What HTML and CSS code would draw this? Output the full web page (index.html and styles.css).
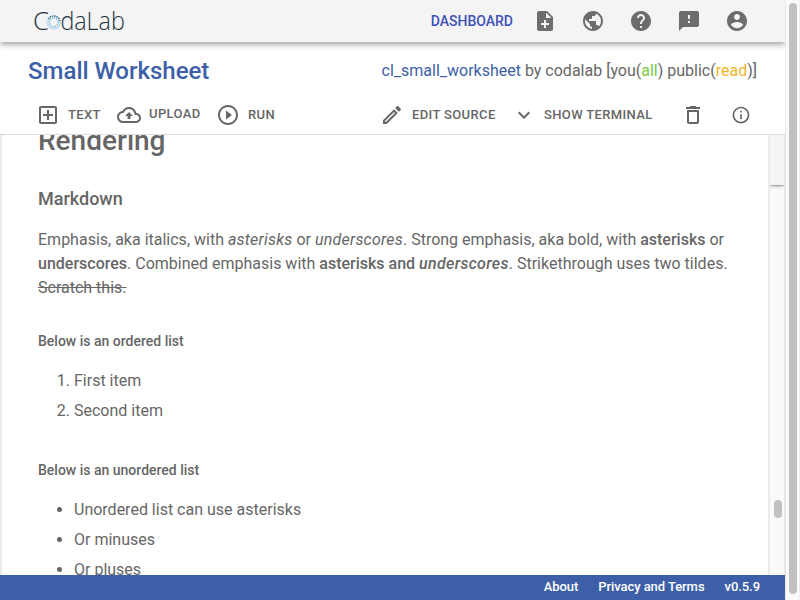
FILE: index.html
```html
<!DOCTYPE html>
<html lang="en">
<head>
<meta charset="utf-8">
<title>CodaLab Worksheets</title>
<link rel="stylesheet" href="styles.css">
</head>
<body>
<div class="app">
  <header class="navbar">
    <svg class="logo" width="96" height="36" viewBox="0 -2 96 36">
      <text x="0" y="25" textLength="16" lengthAdjust="spacingAndGlyphs">C</text>
      <g class="ring">
        <circle class="ring-light" cx="20.8" cy="17.3" r="6.4"/>
        <circle class="ring-mid" cx="20.8" cy="17.3" r="4.5"/>
        <path class="ring-dark" d="M15.3 14.2A6.4 6.4 0 0 1 27 16"/>
      </g>
      <text x="27.4" y="25" textLength="64.4" lengthAdjust="spacingAndGlyphs">daLab</text>
    </svg>
    <nav class="nav-links">
      <a class="dashboard">DASHBOARD</a>
      <svg class="icon" viewBox="0 0 24 24"><path d="M14 2H6c-1.1 0-1.99.9-1.99 2L4 20c0 1.1.89 2 1.99 2H18c1.1 0 2-.9 2-2V8l-6-6zm2 14h-3v3h-2v-3H8v-2h3v-3h2v3h3v2zm-3-7V3.5L18.5 9H13z"/></svg>
      <svg class="icon" viewBox="0 0 24 24"><path d="M12 2C6.48 2 2 6.48 2 12s4.48 10 10 10 10-4.48 10-10S17.52 2 12 2zm-1 17.93c-3.95-.49-7-3.85-7-7.93 0-.62.08-1.21.21-1.79L9 15v1c0 1.1.9 2 2 2v1.93zm6.9-2.54c-.26-.81-1-1.39-1.9-1.39h-1v-3c0-.55-.45-1-1-1H8v-2h2c.55 0 1-.45 1-1V7h2c1.1 0 2-.9 2-2v-.41c2.93 1.19 5 4.06 5 7.41 0 2.08-.8 3.97-2.1 5.39z"/></svg>
      <svg class="icon" viewBox="0 0 24 24"><path d="M12 2C6.48 2 2 6.48 2 12s4.48 10 10 10 10-4.48 10-10S17.52 2 12 2zm1 17h-2v-2h2v2zm2.07-7.75l-.9.92C13.45 12.9 13 13.5 13 15h-2v-.5c0-1.1.45-2.1 1.17-2.83l1.24-1.26c.37-.36.59-.86.59-1.41 0-1.1-.9-2-2-2s-2 .9-2 2H8c0-2.21 1.79-4 4-4s4 1.79 4 4c0 .88-.36 1.68-.93 2.25z"/></svg>
      <svg class="icon" viewBox="0 0 24 24"><path d="M20 2H4c-1.1 0-1.99.9-1.99 2L2 22l4-4h14c1.1 0 2-.9 2-2V4c0-1.1-.9-2-2-2zm-7 12h-2v-2h2v2zm0-4h-2V6h2v4z"/></svg>
      <svg class="icon" viewBox="0 0 24 24"><path d="M12 2C6.48 2 2 6.48 2 12s4.48 10 10 10 10-4.48 10-10S17.52 2 12 2zm0 3c1.66 0 3 1.34 3 3s-1.34 3-3 3-3-1.34-3-3 1.34-3 3-3zm0 14.2c-2.5 0-4.71-1.28-6-3.22.03-1.99 4-3.08 6-3.08 1.99 0 5.97 1.09 6 3.08-1.29 1.94-3.5 3.22-6 3.22z"/></svg>
    </nav>
  </header>

  <section class="ws-header">
    <div class="title-row">
      <h1 class="ws-title">Small Worksheet</h1>
      <div class="ws-meta"><a>cl_small_worksheet</a> by codalab [you(<span class="perm-all">all</span>) public(<span class="perm-read">read</span>)]</div>
    </div>
    <div class="toolbar">
      <button class="tool text"><svg class="icon" viewBox="0 0 24 24"><path d="M19 3H5c-1.11 0-2 .9-2 2v14c0 1.1.89 2 2 2h14c1.1 0 2-.9 2-2V5c0-1.1-.9-2-2-2zm0 16H5V5h14v14zm-8-2h2v-4h4v-2h-4V7h-2v4H7v2h4z"/></svg><span>TEXT</span></button>
      <button class="tool upload"><svg class="icon" viewBox="0 0 24 24"><path d="M19.35 10.04C18.67 6.59 15.64 4 12 4 9.11 4 6.6 5.64 5.35 8.04 2.34 8.36 0 10.91 0 14c0 3.31 2.69 6 6 6h13c2.76 0 5-2.24 5-5 0-2.64-2.05-4.78-4.65-4.96zM19 18H6c-2.21 0-4-1.79-4-4 0-2.05 1.53-3.76 3.56-3.97l1.07-.11.5-.95C8.08 7.14 9.94 6 12 6c2.62 0 4.88 1.86 5.39 4.43l.3 1.5 1.53.11c1.56.1 2.78 1.41 2.78 2.96 0 1.65-1.35 3-3 3zM8 13h2.55v3h2.9v-3H16l-4-4z"/></svg><span>UPLOAD</span></button>
      <button class="tool run"><svg class="icon" viewBox="0 0 24 24"><path d="M10 16.5l6-4.5-6-4.5v9zM12 2C6.48 2 2 6.48 2 12s4.48 10 10 10 10-4.48 10-10S17.52 2 12 2zm0 18c-4.41 0-8-3.59-8-8s3.59-8 8-8 8 3.59 8 8-3.59 8-8 8z"/></svg><span>RUN</span></button>
      <button class="tool edit"><svg class="icon" viewBox="0 0 24 24"><path d="M3 17.25V21h3.75L17.81 9.94l-3.75-3.75L3 17.25zM5.92 19H5v-.92l9.06-9.06.92.92L5.92 19zM20.71 5.63l-2.34-2.34c-.39-.39-1.02-.39-1.41 0l-1.83 1.83 3.75 3.75 1.83-1.83c.39-.39.39-1.02 0-1.41z"/></svg><span>EDIT SOURCE</span></button>
      <button class="tool terminal"><svg class="icon" viewBox="0 0 24 24"><path d="M7.41 8.59L12 13.17l4.59-4.58L18 10l-6 6-6-6 1.41-1.41z"/></svg><span>SHOW TERMINAL</span></button>
      <button class="tool trash"><svg class="icon" viewBox="0 0 24 24"><path d="M6 19c0 1.1.9 2 2 2h8c1.1 0 2-.9 2-2V7H6v12zM8 9h8v10H8V9zm7.5-5l-1-1h-5l-1 1H5v2h14V4z"/></svg></button>
      <button class="tool info"><svg class="icon small" viewBox="0 0 24 24"><path d="M11 17h2v-6h-2v6zm1-15C6.48 2 2 6.48 2 12s4.48 10 10 10 10-4.48 10-10S17.52 2 12 2zm0 18c-4.41 0-8-3.59-8-8s3.59-8 8-8 8 3.59 8 8-3.59 8-8 8zM11 9h2V7h-2v2z"/></svg></button>
    </div>
  </section>

  <div class="workspace">
    <main class="sheet">
      <h2>Rendering</h2>
      <h3>Markdown</h3>
      <p>Emphasis, aka italics, with <em>asterisks</em> or <em>underscores</em>. Strong emphasis, aka bold, with <strong>asterisks</strong> or<br><strong>underscores</strong>. Combined emphasis with <strong>asterisks and <em>underscores</em></strong>. Strikethrough uses two tildes.<br><del>Scratch this.</del></p>
      <h4>Below is an ordered list</h4>
      <ol><li>First item</li><li>Second item</li></ol>
      <h4>Below is an unordered list</h4>
      <ul><li>Unordered list can use asterisks</li><li>Or minuses</li><li>Or pluses</li></ul>
    </main>
    <aside class="inner-scroll">
      <div class="scroll-cap"></div>
      <div class="inner-thumb"></div>
    </aside>
  </div>

  <footer class="footer"><a>About</a><a>Privacy and Terms</a><span>v0.5.9</span></footer>
</div>
<div class="page-scroll"><div class="page-thumb"></div></div>
</body>
</html>
```

FILE: styles.css
```css
* { box-sizing: border-box; }

body {
  margin: 0;
  display: flex;
  width: 800px;
  height: 600px;
  overflow: hidden;
  font-family: Roboto, "Liberation Sans", sans-serif;
  font-size: 16px;
  color: #666;
  background: #fff;
}

.app {
  width: 785px;
  height: 600px;
  display: flex;
  flex-direction: column;
  overflow: hidden;
}

.navbar {
  position: relative;
  z-index: 2;
  flex: none;
  height: 42px;
  display: flex;
  align-items: center;
  justify-content: space-between;
  padding: 0 36px 0 33px;
  background: #f4f4f4;
  box-shadow: 0 2px 4px -1px rgba(0,0,0,.2), 0 4px 5px 0 rgba(0,0,0,.14), 0 1px 10px 0 rgba(0,0,0,.12);
}

.logo {
  overflow: visible;
  font-family: "Open Sans", sans-serif;
  font-size: 26.5px;
  font-weight: 300;
  fill: #1d323c;
}
.ring { fill: none; stroke-dasharray: 1.3 1; }
.ring-light { stroke: #9fd0f3; stroke-width: 1.8; }
.ring-mid { stroke: #6fb3e0; stroke-width: 1.4; }
.ring-dark { stroke: #4d6b7e; stroke-width: 1.5; }

.nav-links { display: flex; align-items: center; gap: 24px; }
.dashboard { font-size: 14px; font-weight: 500; color: #3f51b5; margin-right: -4px; }
.icon { display: block; width: 24px; height: 24px; fill: #666; flex: none; }
.nav-links .icon { fill: #6c6c6c; }
.icon.small { width: 20px; height: 20px; }

.ws-header { flex: none; height: 93px; border-bottom: 1px solid #ddd; }
.title-row {
  display: flex;
  align-items: center;
  justify-content: space-between;
  height: 57px;
  padding: 0 28px;
}
.ws-title { margin: 0; font-size: 24px; font-weight: 500; color: #3d5fa7; }
.ws-meta { font-size: 16px; white-space: nowrap; }
.ws-meta a { color: #3d5fa7; }
.perm-all { color: #7ac943; }
.perm-read { color: #f0b52b; }

.toolbar { display: flex; align-items: center; height: 32px; padding-left: 36px; }
.tool {
  display: flex;
  align-items: center;
  gap: 8px;
  padding: 0;
  border: 0;
  background: none;
  font: 500 13px Roboto, sans-serif;
  letter-spacing: .37px;
  color: #666;
  white-space: nowrap;
}
.tool span { margin-bottom: 2px; }
.text { width: 81px; }
.upload { width: 99px; }
.tool.upload span { margin-bottom: 4px; }
.run { width: 164px; }
.edit { width: 132px; }
.terminal { width: 169px; }
.trash { width: 50px; }

.workspace { flex: 1; min-height: 0; display: flex; overflow: hidden; }
.sheet {
  width: 770px;
  padding: 0 36px;
  border-left: 2px solid #ebebeb;
  border-right: 2px solid #ebebeb;
  overflow: hidden;
}
.sheet h2 { margin: -11px 0 31px; font-size: 28px; line-height: 34px; font-weight: 500; }
.sheet h3 { margin: 0 0 19px; font-size: 18px; line-height: 20px; font-weight: 500; }
.sheet p { margin: 0 0 31px; line-height: 24px; white-space: nowrap; }
.sheet h4 { margin: 0 0 15px; font-size: 14px; line-height: 20px; font-weight: 500; }
.sheet strong { font-weight: 500; }
.sheet em { letter-spacing: .21px; }
.sheet strong em { letter-spacing: .3px; }
.sheet ol, .sheet ul { margin: 0 0 34px; padding-left: 36px; }
.sheet li { line-height: 30px; }

.inner-scroll { width: 15px; background: #fafafa; border-right: 1px solid #e8e8e8; overflow: hidden; }
.scroll-cap { height: 50px; background: #f4f4f4; box-shadow: 0 2px 4px -1px rgba(0,0,0,.3), 0 1px 1px rgba(0,0,0,.2); }
.inner-thumb { width: 8px; height: 18px; margin: 315px 0 0 4px; border-radius: 4px; background: #c1c1c1; }

.footer {
  flex: none;
  height: 25px;
  display: flex;
  align-items: center;
  justify-content: flex-end;
  gap: 20px;
  padding-right: 25px;
  padding-bottom: 2px;
  background: #3d5fa7;
  color: #fff;
  font-size: 13px;
  font-weight: 500;
  letter-spacing: -.06px;
}

.page-scroll { width: 15px; height: 600px; padding: 3px; background: #fafafa; border-left: 1px solid #e8e8e8; border-right: 1px solid #eee; }
.page-thumb { width: 8px; height: 591px; border-radius: 4px; background: #c1c1c1; }
```
